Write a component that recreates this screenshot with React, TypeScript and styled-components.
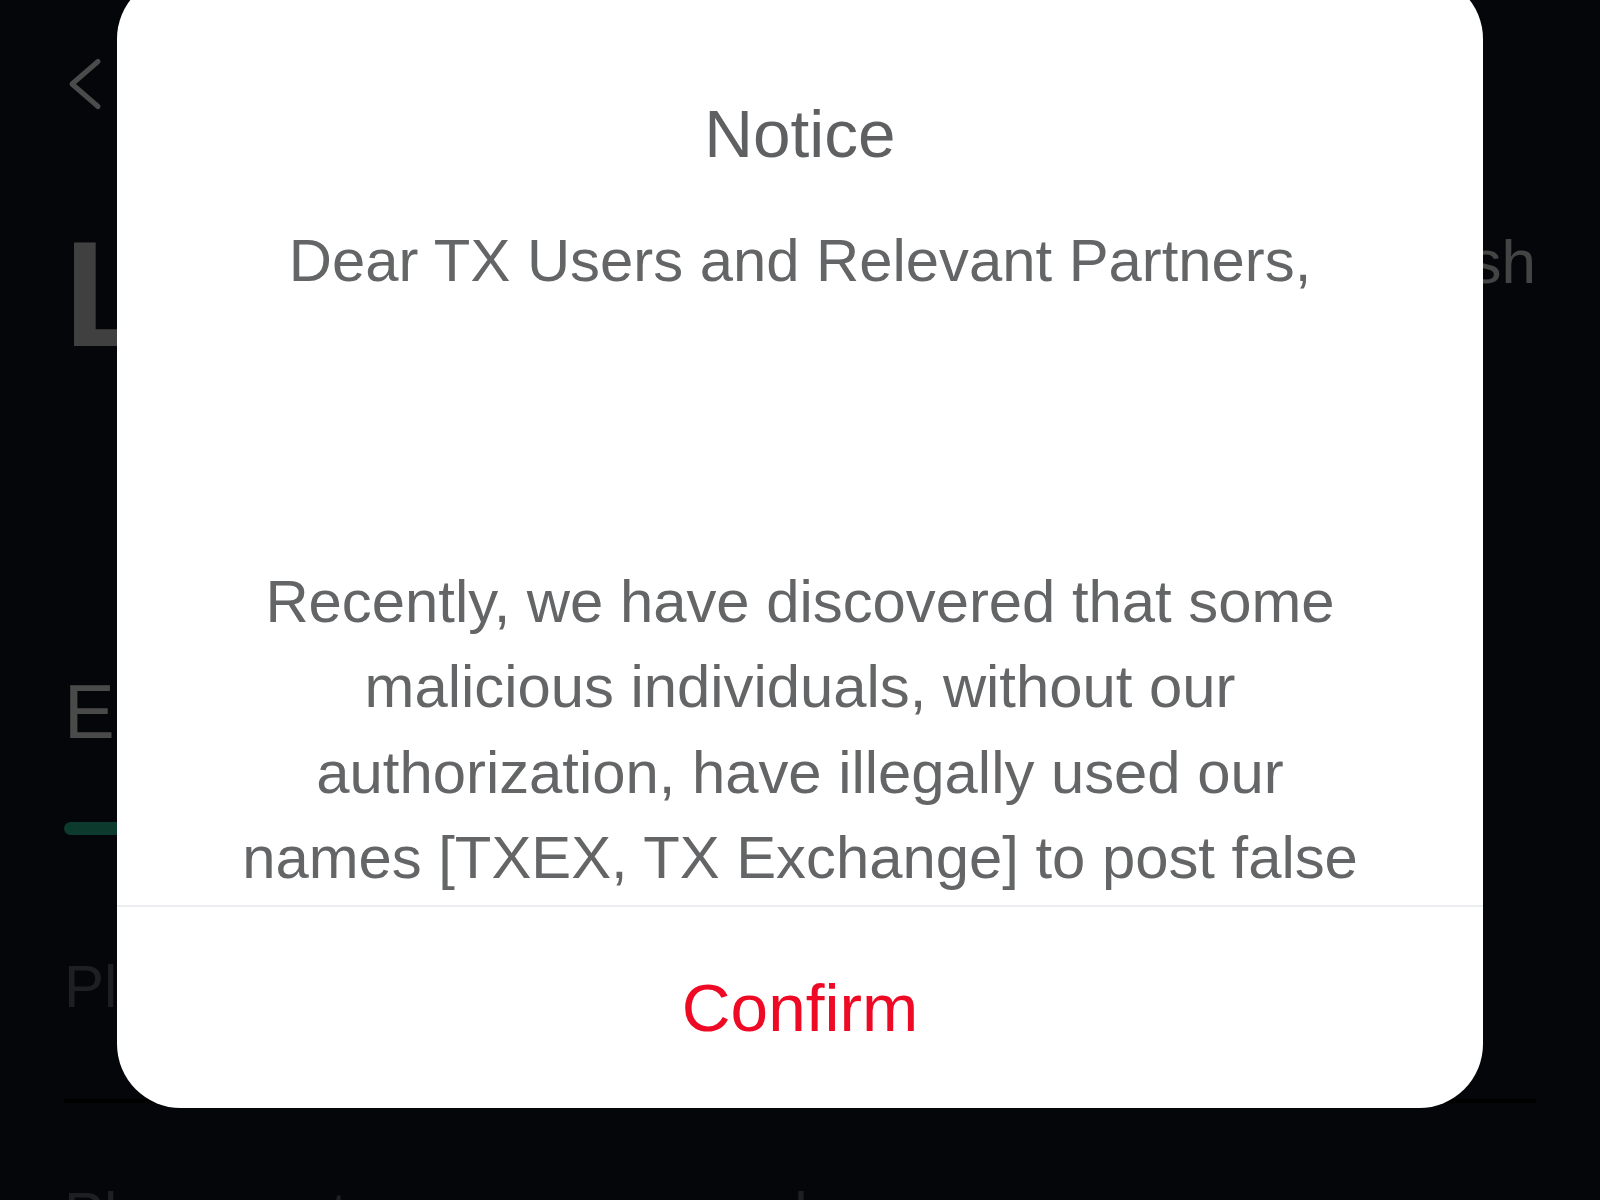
import styled, { createGlobalStyle } from 'styled-components'

const GlobalStyle = createGlobalStyle`
  * {
    box-sizing: border-box;
  }
  body {
    margin: 0;
    background-color: #111421;
    font-family: 'Liberation Sans', Arial, Helvetica, sans-serif;
    overflow: hidden;
  }
`

const StyledPage = styled.div`
  height: 100vh;
  overflow: hidden;
  padding: 0 64px;
`

const StyledNavBar = styled.div`
  height: 168px;
  display: flex;
  align-items: center;
`

const StyledBackButton = styled.button`
  width: 40px;
  height: 56px;
  padding: 0;
  border: none;
  background: none;
  display: flex;
  cursor: pointer;
`

const StyledHeader = styled.div`
  margin-top: 40px;
  display: flex;
  justify-content: space-between;
  align-items: flex-start;
`

const StyledTitle = styled.h1`
  margin: 0;
  font-size: 150px;
  line-height: 172px;
  font-weight: 700;
  color: #d8d8d8;
`

const StyledLanguage = styled.a`
  margin-top: 18px;
  font-size: 62px;
  line-height: 71px;
  color: #e3e3e3;
  text-decoration: none;
`

const StyledTabs = styled.div`
  margin-top: 288px;
  display: flex;
  gap: 80px;
`

const StyledTab = styled.div<{ $active?: boolean }>`
  display: flex;
  flex-direction: column;
  font-size: 76px;
  line-height: 87px;
  color: ${({ $active }) => ($active ? '#f7f7f7' : '#8a8d99')};

  &::after {
    content: '';
    margin-top: 67px;
    height: 13px;
    border-radius: 7px;
    background-color: ${({ $active }) => ($active ? '#2bc193' : 'transparent')};
  }
`

const StyledForm = styled.form`
  margin-top: 41px;
  display: flex;
  flex-direction: column;
`

const StyledField = styled.label`
  display: block;
  padding: 76px 0 78px;
  border-bottom: 4px solid #000;
`

const StyledInput = styled.input`
  display: block;
  width: 100%;
  height: 69px;
  padding: 0;
  border: none;
  outline: none;
  background: transparent;
  font-family: inherit;
  font-size: 60px;
  color: #f7f7f7;

  &::placeholder {
    color: #646775;
  }
`

const StyledOverlay = styled.div`
  position: fixed;
  inset: 0;
  background-color: rgba(0, 0, 0, 0.7);
  display: flex;
  justify-content: center;
  align-items: flex-start;
`

const StyledDialog = styled.div`
  width: 1366px;
  height: 1133px;
  margin-top: -25px;
  background-color: #fff;
  border-radius: 64px;
  overflow: hidden;
  display: flex;
  flex-direction: column;
`

const StyledDialogHeader = styled.div`
  padding-top: 120px;
  font-size: 67.5px;
  line-height: 78px;
  text-align: center;
  color: #5f6062;
`

const StyledDialogMessage = styled.div`
  flex: 1;
  min-height: 0;
  margin-top: 45px;
  padding: 0 112px;
  overflow-y: auto;
  scrollbar-width: none;
  font-size: 59.8px;
  line-height: 85.3px;
  text-align: center;
  white-space: pre-wrap;
  color: #646566;

  &::-webkit-scrollbar {
    display: none;
  }
`

const StyledDialogFooter = styled.div`
  border-top: 2px solid #ebedf0;
  display: flex;
`

const StyledConfirmButton = styled.button`
  flex: 1;
  height: 201px;
  padding: 0;
  border: none;
  background: none;
  font-family: inherit;
  font-size: 67.5px;
  color: #ee0a24;
  cursor: pointer;
`

const NOTICE_TEXT = `Dear TX Users and Relevant Partners,



Recently, we have discovered that some malicious individuals, without our authorization, have illegally used our names [TXEX, TX Exchange] to post false information on various platforms and engage in fraudulent activities. Please stay vigilant and verify all information through our official channels only.`

function BackIcon() {
  return (
    <svg width='40' height='56' viewBox='0 0 40 56' fill='none'>
      <polyline
        points='34,5.5 8,28 34,50.5'
        stroke='#fafafa'
        strokeWidth='5'
        strokeLinecap='round'
        strokeLinejoin='round'
      />
    </svg>
  )
}

export default function App() {
  return (
    <>
      <GlobalStyle />
      <StyledPage>
        <StyledNavBar>
          <StyledBackButton aria-label='Back'>
            <BackIcon />
          </StyledBackButton>
        </StyledNavBar>

        <StyledHeader>
          <StyledTitle>Log In</StyledTitle>
          <StyledLanguage href='#'>English</StyledLanguage>
        </StyledHeader>

        <StyledTabs>
          <StyledTab $active>Email</StyledTab>
          <StyledTab>Phone</StyledTab>
        </StyledTabs>

        <StyledForm onSubmit={(e) => e.preventDefault()}>
          <StyledField>
            <StyledInput type='email' placeholder='Please enter your email' />
          </StyledField>
          <StyledField>
            <StyledInput
              type='password'
              placeholder='Please enter your password'
            />
          </StyledField>
        </StyledForm>
      </StyledPage>

      <StyledOverlay>
        <StyledDialog role='dialog'>
          <StyledDialogHeader>Notice</StyledDialogHeader>
          <StyledDialogMessage>{NOTICE_TEXT}</StyledDialogMessage>
          <StyledDialogFooter>
            <StyledConfirmButton>Confirm</StyledConfirmButton>
          </StyledDialogFooter>
        </StyledDialog>
      </StyledOverlay>
    </>
  )
}
